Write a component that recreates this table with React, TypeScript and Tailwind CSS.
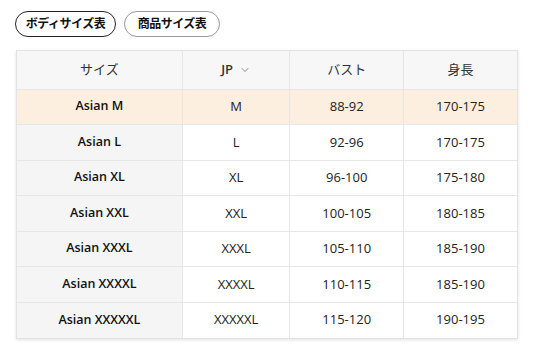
import React from 'react';
import { ChevronDown } from 'lucide-react';

const rows = [
  ['Asian M', 'M', '88-92', '170-175'],
  ['Asian L', 'L', '92-96', '170-175'],
  ['Asian XL', 'XL', '96-100', '175-180'],
  ['Asian XXL', 'XXL', '100-105', '180-185'],
  ['Asian XXXL', 'XXXL', '105-110', '185-190'],
  ['Asian XXXXL', 'XXXXL', '110-115', '185-190'],
  ['Asian XXXXXL', 'XXXXXL', '115-120', '190-195'],
];

export default function App() {
  return (
    <div className="h-[361px] w-[534px] bg-white pl-[15px] pt-[11px] font-['Open_Sans','Noto_Sans_CJK_JP',sans-serif] text-[13px] text-[#222]">
      <div className="flex gap-[8px]">
        <button className="h-[26px] w-[101px] rounded-full border border-[#222] text-[12px] font-bold tracking-[-0.5px] text-[#111]">
          ボディサイズ表
        </button>
        <button className="h-[26px] w-[96px] rounded-full border border-[#999] text-[12px] font-bold tracking-[-0.5px] text-[#111]">
          商品サイズ表
        </button>
      </div>

      <div className="ml-[1px] mt-[13px] w-[502px] border border-[#e3e3e3] shadow-[0_1px_3px_rgba(0,0,0,0.12)]">
        <table className="w-full border-collapse text-center">
          <colgroup>
            <col className="w-[166px]" />
            <col className="w-[108px]" />
            <col className="w-[114px]" />
            <col className="w-[114px]" />
          </colgroup>
          <thead>
            <tr className="h-[38px] bg-[#f7f7f7] text-[#333]">
              <th className="border-r border-[#e6e6e6] font-normal">サイズ</th>
              <th className="border-r border-[#e6e6e6] font-normal">
                <span className="inline-flex items-center gap-[6px] font-semibold">
                  JP
                  <ChevronDown size={12} strokeWidth={1.5} className="text-[#666]" />
                </span>
              </th>
              <th className="border-r border-[#e6e6e6] font-normal">バスト</th>
              <th className="font-normal">身長</th>
            </tr>
          </thead>
          <tbody>
            {rows.map((r, i) => (
              <tr
                key={r[0]}
                className={`h-[35.5px] border-t border-[#e6e6e6] ${i === 0 ? 'bg-[#fdefe0]' : 'bg-white'}`}
              >
                <td className={`border-r border-[#e6e6e6] text-[12.5px] font-semibold text-[#111] ${i === 0 ? '' : 'bg-[#f5f5f5]'}`}>
                  {r[0]}
                </td>
                <td className="border-r border-[#e6e6e6]">{r[1]}</td>
                <td className="border-r border-[#e6e6e6]">{r[2]}</td>
                <td>{r[3]}</td>
              </tr>
            ))}
          </tbody>
        </table>
      </div>
    </div>
  );
}
